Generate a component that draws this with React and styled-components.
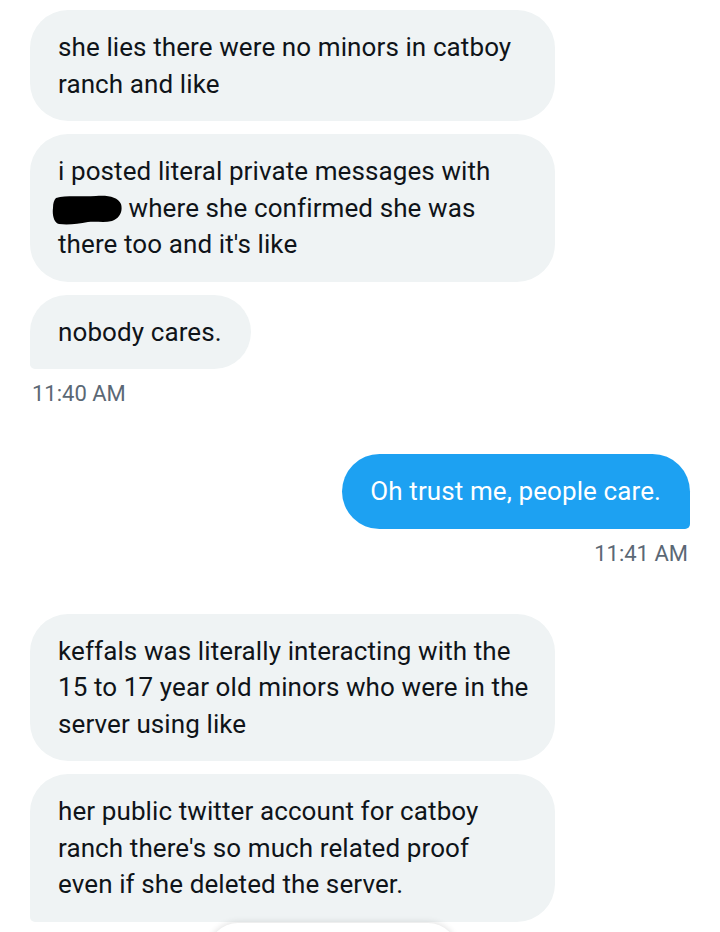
import React from "react";
import styled, { createGlobalStyle } from "styled-components";

const conversation = [
  {
    mine: false,
    time: "11:40 AM",
    messages: [
      { lines: ["she lies there were no minors in catboy", "ranch and like"] },
      {
        lines: [
          "i posted literal private messages with",
          [<Redacted key="r" />, " where she confirmed she was"],
          "there too and it's like",
        ],
      },
      { lines: ["nobody cares."] },
    ],
  },
  {
    mine: true,
    time: "11:41 AM",
    messages: [{ lines: ["Oh trust me, people care."] }],
  },
  {
    mine: false,
    messages: [
      {
        lines: [
          "keffals was literally interacting with the",
          "15 to 17 year old minors who were in the",
          "server using like",
        ],
      },
      {
        lines: [
          "her public twitter account for catboy",
          "ranch there's so much related proof",
          "even if she deleted the server.",
        ],
      },
    ],
  },
];

function Redacted() {
  return (
    <Blot viewBox="0 0 70 32" aria-hidden="true">
      <path
        d="M4 5 C14 2 30 4 44 3 C56 2 66 4 69 11 C71 18 68 25 60 28 C52 30 44 28 36 29 C26 31 16 32 7 31 C2 30 0 22 1 15 C1 10 2 7 4 5 Z"
        fill="#000"
      />
    </Blot>
  );
}

const App = () => {
  return (
    <>
      <GlobalStyle />
      <Screen>
        {conversation.map((group, gi) => (
          <Group key={gi} $mine={group.mine}>
            {group.messages.map((msg, mi) => (
              <Bubble
                key={mi}
                $mine={group.mine}
                $wide={msg.lines.length > 1}
                $tail={mi === group.messages.length - 1}
              >
                {msg.lines.map((line, li) => (
                  <Line key={li}>{line}</Line>
                ))}
              </Bubble>
            ))}
            {group.time && <Time>{group.time}</Time>}
          </Group>
        ))}
        <Composer />
      </Screen>
    </>
  );
};

/**
 *  STYLES
 */
const GlobalStyle = createGlobalStyle`
  html, body {
    margin: 0;
    padding: 0;
    background: #fff;
  }
  body {
    font-family: Roboto, "Noto Sans", "Liberation Sans", sans-serif;
    -webkit-font-smoothing: antialiased;
  }
`;

const Screen = styled.div`
  position: relative;
  height: 932px;
  overflow: hidden;
  box-sizing: border-box;
  padding: 10px 30px 0;
  display: flex;
  flex-direction: column;
  gap: 48px;
  background: #fff;
`;

const Group = styled.div`
  display: flex;
  flex-direction: column;
  align-items: ${(p) => (p.$mine ? "flex-end" : "flex-start")};
  gap: 13px;
`;

const Bubble = styled.div`
  box-sizing: border-box;
  width: ${(p) => (p.$wide ? "525px" : "auto")};
  padding: 19px 29px 19px 28px;
  font-size: 26px;
  letter-spacing: 0.1px;
  line-height: 36.5px;
  color: ${(p) => (p.$mine ? "#fff" : "#0f1419")};
  background: ${(p) => (p.$mine ? "#1da1f2" : "#eff3f4")};
  border-radius: 38px;
  ${(p) =>
    p.$tail &&
    (p.$mine
      ? "border-bottom-right-radius: 5px;"
      : "border-bottom-left-radius: 5px;")}
`;

const Line = styled.div`
  white-space: nowrap;
`;

const Blot = styled.svg`
  display: inline-block;
  width: 70px;
  height: 32px;
  margin-left: -6px;
  vertical-align: -8px;
`;

const Time = styled.div`
  font-size: 22px;
  line-height: 24px;
  color: #5b6875;
  padding: 0 2px;
`;

const Composer = styled.div`
  position: absolute;
  left: 208px;
  top: 923px;
  width: 250px;
  height: 60px;
  border-radius: 30px;
  background: #fff;
  box-shadow: 0 -1px 6px rgba(0, 0, 0, 0.12);
`;

export default App;
